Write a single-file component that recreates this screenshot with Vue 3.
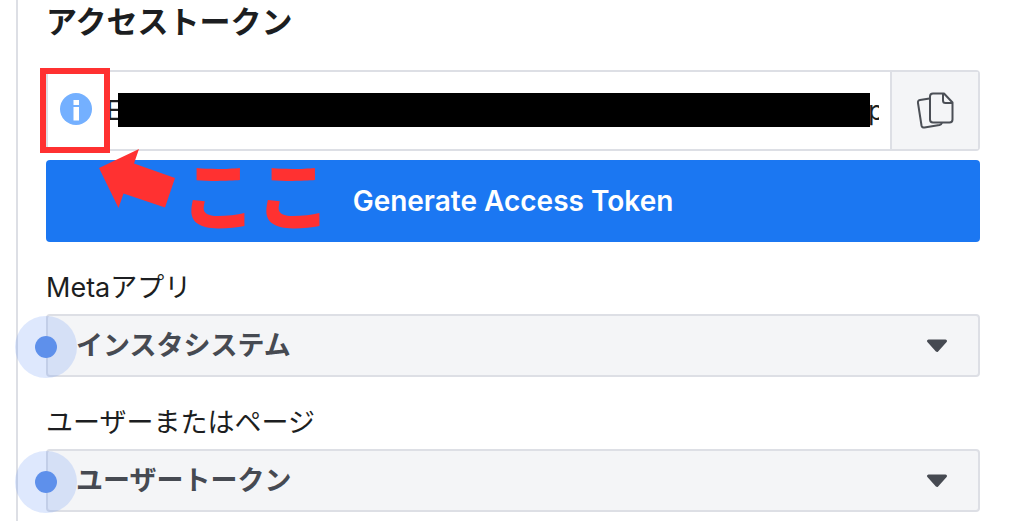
<script setup>
import { ref } from 'vue'

const token = ref('Eaa' + '0'.repeat(42) + 'p')
const fields = [
  { id: 'app-select', label: 'Metaアプリ', value: 'インスタシステム' },
  { id: 'user-select', label: 'ユーザーまたはページ', value: 'ユーザートークン' },
]
</script>

<template>
  <main class="panel">
    <h2 class="title"><label for="token">アクセストークン</label></h2>

    <div class="token-row">
      <button class="info" type="button" aria-label="Info">
        <svg width="32" height="32" viewBox="0 0 32 32" aria-hidden="true">
          <circle cx="16" cy="16" r="16" fill="#74b0ff" />
          <path d="M13.500 7h5.500v5h-5.500zM13.500 14h5.500v13.500h-5.500z" fill="#fff" />
        </svg>
      </button>
      <input id="token" class="token" type="text" :value="token" readonly />
      <button class="copy" type="button" aria-label="Copy">
        <svg width="38" height="38" viewBox="0 0 38 38" fill="none" stroke="#4b4f56" stroke-width="2" stroke-linejoin="round" aria-hidden="true">
          <path d="M13.500 6.500L4 8Q1.500 8.500 2 11L5.500 33.500Q6 36 8.500 35.500L23.500 33Q25.500 32.500 26 30.500" />
          <path d="M17 1.500H28L36.500 10.500V27.500Q36.500 30.500 33.500 30.500H17Q14 30.500 14 27.500V4.500Q14 1.500 17 1.500Z" />
          <path d="M27 2V8.500Q27 11 29.500 11H36" />
        </svg>
      </button>
      <span class="redaction"></span>
      <span class="frame"></span>
      <svg class="arrow" width="76" height="60" viewBox="0 0 76 60" aria-hidden="true">
        <path d="M0 19L40 0L35 14.500L76 29L66 58.500L24.500 44.500L19.500 59Z" fill="#ff3131" />
      </svg>
      <span class="callout">ここ</span>
    </div>

    <button class="generate" type="button">Generate Access Token</button>

    <div v-for="field in fields" :key="field.id" class="field">
      <label class="label" :for="field.id">{{ field.label }}</label>
      <div class="select-wrap">
        <select :id="field.id" class="select">
          <option>{{ field.value }}</option>
        </select>
        <svg class="caret" width="22" height="14" viewBox="0 0 22 14" aria-hidden="true">
          <path d="M2.500 2H19.500L11 11.500Z" fill="#464a52" stroke="#464a52" stroke-width="3" stroke-linejoin="round" />
        </svg>
        <span class="pulse"></span>
      </div>
    </div>
  </main>
</template>

<style>
body {
  margin: 0;
  background: #fff;
}
</style>

<style scoped>
.panel {
  box-sizing: border-box;
  min-height: 100vh;
  margin-left: 16px;
  padding: 0 44px 8px 28px;
  border-left: 2px solid #dddfe5;
  font-family: Inter, "Noto Sans CJK JP", sans-serif;
  color: #1c1e21;
}

button,
input,
select {
  box-sizing: border-box;
  margin: 0;
  font-family: inherit;
}

.title {
  margin: 0;
  padding-bottom: 26px;
  font-size: 31px;
  font-weight: 700;
  line-height: 44px;
}

.token-row {
  position: relative;
  display: flex;
  height: 81px;
  box-sizing: border-box;
  border: 2px solid #dddfe5;
  border-radius: 4px;
}

.info {
  display: flex;
  align-items: center;
  width: 58px;
  padding: 0 0 4px 12px;
  border: 0;
  background: none;
}

.token {
  flex: 1;
  min-width: 0;
  margin-right: 11px;
  padding: 0;
  border: 0;
  outline: 0;
  background: none;
  color: #1c1e21;
  font-size: 27px;
}

.copy {
  display: flex;
  align-items: center;
  justify-content: center;
  width: 88px;
  padding: 0;
  border: 0;
  border-left: 2px solid #dddfe5;
  background: #f4f5f7;
}

.redaction {
  position: absolute;
  top: 21px;
  right: 108px;
  left: 70px;
  height: 34px;
  background: #000;
}

.frame {
  position: absolute;
  top: -4px;
  left: -8px;
  box-sizing: border-box;
  width: 70px;
  height: 85px;
  border: 6px solid #ff3131;
}

.arrow {
  position: absolute;
  top: 77px;
  left: 51px;
}

.callout {
  position: absolute;
  top: 70px;
  left: 133px;
  color: #ff3131;
  font-family: "Noto Sans CJK JP", sans-serif;
  font-size: 75px;
  font-weight: 900;
  line-height: 100px;
}

.generate {
  display: block;
  width: 100%;
  height: 82px;
  margin-top: 9px;
  padding: 0;
  border: 0;
  border-radius: 4px;
  background: #1b77f2;
  color: #fff;
  font-size: 28px;
  font-weight: 600;
}

.field {
  padding-top: 26px;
}

.label {
  display: block;
  padding-bottom: 6px;
  font-size: 27px;
  line-height: 40px;
}

.select-wrap {
  position: relative;
}

.select {
  display: block;
  width: 100%;
  height: 63px;
  padding: 0 60px 0 28px;
  border: 2px solid #dddfe5;
  border-radius: 4px;
  appearance: none;
  background: #f4f5f7;
  color: #464a52;
  font-size: 27px;
  font-weight: 700;
}

.caret {
  position: absolute;
  top: 25px;
  right: 32px;
}

.pulse {
  position: absolute;
  top: 2px;
  left: -31px;
  box-sizing: border-box;
  width: 62px;
  height: 62px;
  border: 20px solid rgba(92, 140, 245, 0.2);
  border-radius: 50%;
  background: #5e90eb;
  background-clip: padding-box;
}
</style>
